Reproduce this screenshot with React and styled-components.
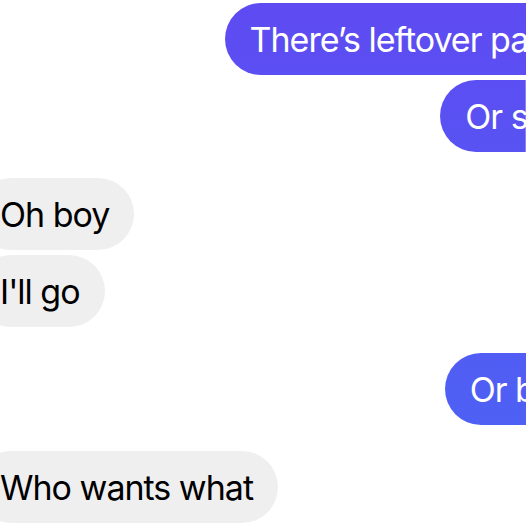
import React from 'react'
import styled, { createGlobalStyle } from 'styled-components'

const GlobalStyle = createGlobalStyle`
  html, body {
    margin: 0;
    padding: 0;
    background: #ffffff;
    overflow: hidden;
  }
  body {
    width: 526px;
    height: 526px;
    font-family: Inter, "Noto Sans", sans-serif;
  }
`

const messages = [
  { group: 1, mine: true, text: 'There’s leftover pasta?' },
  { group: 1, mine: true, text: 'Or sushi' },
  { group: 2, mine: false, text: 'Oh boy' },
  { group: 2, mine: false, text: "I'll go" },
  { group: 3, mine: true, text: 'Or buns' },
  { group: 4, mine: false, text: 'Who wants what' },
]

function App() {
  const groups = []
  messages.forEach((m) => {
    const last = groups[groups.length - 1]
    if (last && last.id === m.group) last.items.push(m)
    else groups.push({ id: m.group, mine: m.mine, items: [m] })
  })

  return (
    <>
      <GlobalStyle />
      <Thread>
        {groups.map((g) => (
          <Group key={g.id} $mine={g.mine}>
            {g.items.map((m, i) => (
              <Bubble key={i} $mine={m.mine}>
                {m.text}
              </Bubble>
            ))}
          </Group>
        ))}
      </Thread>
    </>
  )
}

export default App

// the thread is wider than the window: received bubbles start off the left
// edge and sent bubbles run past the right one
const Thread = styled.div`
  display: flex;
  flex-direction: column;
  gap: 26px;
  padding-top: 3px;
  margin-left: -25px;
  width: 640px;
`

const Group = styled.div`
  display: flex;
  flex-direction: column;
  gap: 5px;
  align-items: ${(p) => (p.$mine ? 'flex-end' : 'flex-start')};
`

const Bubble = styled.div`
  height: 72px;
  box-sizing: border-box;
  display: flex;
  align-items: center;
  padding: 0 25px;
  border-radius: 36px;
  font-size: 34px;
  white-space: nowrap;
  letter-spacing: -1px;
  color: ${(p) => (p.$mine ? '#ffffff' : '#000000')};
  background: ${(p) =>
    p.$mine
      ? 'linear-gradient(180deg, #5e4bf2 0px, #4f5ff4 400px, #4868f5 526px) fixed'
      : '#efeff0'};
`
